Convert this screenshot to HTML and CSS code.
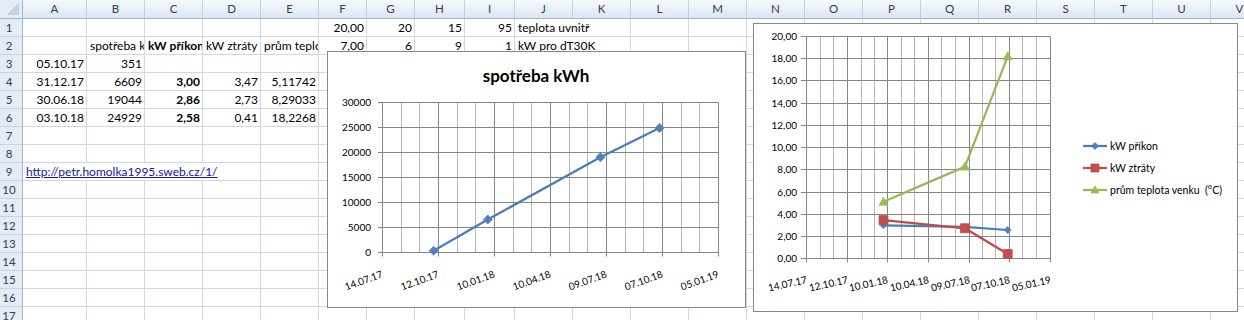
FILE: index.html
```html
<!DOCTYPE html>
<html lang="cs">

<head>
  <meta charset="UTF-8">
  <title>spotřeba kWh</title>
  <link rel="stylesheet" href="styles.css">
</head>

<body>
  <div class="sheet-wrap">
    <table class="sheet">
      <colgroup>
        <col class="c-rh">
        <col class="c-a">
        <col class="c-std" span="4">
        <col class="c-fg" span="2">
        <col class="c-hi" span="2">
        <col class="c-std" span="13">
      </colgroup>
      <tr class="head">
        <th class="corner"><span class="tri"></span></th>
        <th>A</th><th>B</th><th>C</th><th>D</th><th>E</th><th>F</th><th>G</th><th>H</th><th>I</th><th>J</th><th>K</th>
        <th>L</th><th>M</th><th>N</th><th>O</th><th>P</th><th>Q</th><th>R</th><th>S</th><th>T</th><th>U</th><th>V</th>
      </tr>
      <tr>
        <th class="rh">1</th>
        <td></td><td></td><td></td><td></td><td></td>
        <td class="num">20,00</td><td class="num">20</td><td class="num">15</td><td class="num">95</td>
        <td colspan="2" class="spill">teplota uvnitř</td>
        <td></td><td></td><td></td><td></td><td></td><td></td><td></td><td></td><td></td><td></td><td></td>
      </tr>
      <tr>
        <th class="rh">2</th>
        <td></td><td>spotřeba kWh</td><td class="bold">kW příkon</td><td>kW ztráty</td><td>prům teplota venku  (°C)</td>
        <td class="num">7,00</td><td class="num">6</td><td class="num">9</td><td class="num">1</td>
        <td colspan="2" class="spill">kW pro dT30K</td>
        <td></td><td></td><td></td><td></td><td></td><td></td><td></td><td></td><td></td><td></td><td></td>
      </tr>
      <tr>
        <th class="rh">3</th>
        <td class="num">05.10.17</td><td class="num">351</td>
        <td></td><td></td><td></td><td></td><td></td><td></td><td></td><td></td><td></td><td></td>
        <td></td><td></td><td></td><td></td><td></td><td></td><td></td><td></td><td></td><td></td>
      </tr>
      <tr>
        <th class="rh">4</th>
        <td class="num">31.12.17</td><td class="num">6609</td><td class="num bold">3,00</td><td class="num">3,47</td><td class="num">5,11742</td>
        <td></td><td></td><td></td><td></td><td></td><td></td><td></td><td></td><td></td>
        <td></td><td></td><td></td><td></td><td></td><td></td><td></td><td></td>
      </tr>
      <tr>
        <th class="rh">5</th>
        <td class="num">30.06.18</td><td class="num">19044</td><td class="num bold">2,86</td><td class="num">2,73</td><td class="num">8,29033</td>
        <td></td><td></td><td></td><td></td><td></td><td></td><td></td><td></td><td></td>
        <td></td><td></td><td></td><td></td><td></td><td></td><td></td><td></td>
      </tr>
      <tr>
        <th class="rh">6</th>
        <td class="num">03.10.18</td><td class="num">24929</td><td class="num bold">2,58</td><td class="num">0,41</td><td class="num">18,2268</td>
        <td></td><td></td><td></td><td></td><td></td><td></td><td></td><td></td><td></td>
        <td></td><td></td><td></td><td></td><td></td><td></td><td></td><td></td>
      </tr>
      <tr>
        <th class="rh">7</th>
        <td></td><td></td><td></td><td></td><td></td><td></td><td></td><td></td><td></td><td></td><td></td>
        <td></td><td></td><td></td><td></td><td></td><td></td><td></td><td></td><td></td><td></td><td></td>
      </tr>
      <tr>
        <th class="rh">8</th>
        <td></td><td></td><td></td><td></td><td></td><td></td><td></td><td></td><td></td><td></td><td></td>
        <td></td><td></td><td></td><td></td><td></td><td></td><td></td><td></td><td></td><td></td><td></td>
      </tr>
      <tr>
        <th class="rh">9</th>
        <td colspan="4" class="spill"><a href="http://petr.homolka1995.sweb.cz/1/">http://petr.homolka1995.sweb.cz/1/</a></td>
        <td></td><td></td><td></td><td></td><td></td><td></td><td></td><td></td><td></td>
        <td></td><td></td><td></td><td></td><td></td><td></td><td></td><td></td><td></td>
      </tr>
      <tr>
        <th class="rh">10</th>
        <td></td><td></td><td></td><td></td><td></td><td></td><td></td><td></td><td></td><td></td><td></td>
        <td></td><td></td><td></td><td></td><td></td><td></td><td></td><td></td><td></td><td></td><td></td>
      </tr>
      <tr>
        <th class="rh">11</th>
        <td></td><td></td><td></td><td></td><td></td><td></td><td></td><td></td><td></td><td></td><td></td>
        <td></td><td></td><td></td><td></td><td></td><td></td><td></td><td></td><td></td><td></td><td></td>
      </tr>
      <tr>
        <th class="rh">12</th>
        <td></td><td></td><td></td><td></td><td></td><td></td><td></td><td></td><td></td><td></td><td></td>
        <td></td><td></td><td></td><td></td><td></td><td></td><td></td><td></td><td></td><td></td><td></td>
      </tr>
      <tr>
        <th class="rh">13</th>
        <td></td><td></td><td></td><td></td><td></td><td></td><td></td><td></td><td></td><td></td><td></td>
        <td></td><td></td><td></td><td></td><td></td><td></td><td></td><td></td><td></td><td></td><td></td>
      </tr>
      <tr>
        <th class="rh">14</th>
        <td></td><td></td><td></td><td></td><td></td><td></td><td></td><td></td><td></td><td></td><td></td>
        <td></td><td></td><td></td><td></td><td></td><td></td><td></td><td></td><td></td><td></td><td></td>
      </tr>
      <tr>
        <th class="rh">15</th>
        <td></td><td></td><td></td><td></td><td></td><td></td><td></td><td></td><td></td><td></td><td></td>
        <td></td><td></td><td></td><td></td><td></td><td></td><td></td><td></td><td></td><td></td><td></td>
      </tr>
      <tr>
        <th class="rh">16</th>
        <td></td><td></td><td></td><td></td><td></td><td></td><td></td><td></td><td></td><td></td><td></td>
        <td></td><td></td><td></td><td></td><td></td><td></td><td></td><td></td><td></td><td></td><td></td>
      </tr>
      <tr>
        <th class="rh">17</th>
        <td></td><td></td><td></td><td></td><td></td><td></td><td></td><td></td><td></td><td></td><td></td>
        <td></td><td></td><td></td><td></td><td></td><td></td><td></td><td></td><td></td><td></td><td></td>
      </tr>
    </table>

    <!-- graf 1: spotřeba kWh -->
    <div class="chart chart-kwh">
      <svg width="417" height="255" viewBox="328 52 417 255">
        <text class="title" x="536" y="82" text-anchor="middle">spotřeba kWh</text>
        <path class="minor" d="M401.5 102.5V252.5M419.5 102.5V252.5M457.5 102.5V252.5M475.5 102.5V252.5M513.5 102.5V252.5M531.5 102.5V252.5M569.5 102.5V252.5M587.5 102.5V252.5M625.5 102.5V252.5M643.5 102.5V252.5M681.5 102.5V252.5M699.5 102.5V252.5"/>
        <path class="major" d="M382.5 102.5H718.5M382.5 127.5H718.5M382.5 152.5H718.5M382.5 177.5H718.5M382.5 202.5H718.5M382.5 227.5H718.5M378 252.5H718.5
          M382.5 102.5V256.5M438.5 102.5V256.5M494.5 102.5V256.5M550.5 102.5V256.5M606.5 102.5V256.5M662.5 102.5V256.5M718.5 102.5V256.5
          M378 102.5H382.5M378 127.5H382.5M378 152.5H382.5M378 177.5H382.5M378 202.5H382.5M378 227.5H382.5"/>
        <g class="ylab" text-anchor="end">
          <text x="371" y="106">30000</text>
          <text x="371" y="131">25000</text>
          <text x="371" y="156">20000</text>
          <text x="371" y="181">15000</text>
          <text x="371" y="206">10000</text>
          <text x="371" y="231">5000</text>
          <text x="371" y="256">0</text>
        </g>
        <g class="xlab" text-anchor="end">
          <text transform="translate(383.5 277) rotate(-20)">14.07.17</text>
          <text transform="translate(439.5 277) rotate(-20)">12.10.17</text>
          <text transform="translate(495.5 277) rotate(-20)">10.01.18</text>
          <text transform="translate(551.5 277) rotate(-20)">10.04.18</text>
          <text transform="translate(607.5 277) rotate(-20)">09.07.18</text>
          <text transform="translate(663.5 277) rotate(-20)">07.10.18</text>
          <text transform="translate(719.5 277) rotate(-20)">05.01.19</text>
        </g>
        <polyline class="s-blue" points="433.6,250.7 487.8,219.5 600.4,157.3 659.5,127.9"/>
        <path class="m-blue" d="M433.6 246.2l4.5 4.5-4.5 4.5-4.5-4.5zM487.8 215l4.5 4.5-4.5 4.5-4.5-4.5zM600.4 152.8l4.5 4.5-4.5 4.5-4.5-4.5zM659.5 123.4l4.5 4.5-4.5 4.5-4.5-4.5z"/>
      </svg>
    </div>

    <!-- graf 2: příkon, ztráty, teplota -->
    <div class="chart chart-temp">
      <svg width="483" height="287" viewBox="754 24 483 287">
        <path class="minor" d="M820.5 36.5V258.5M833.5 36.5V258.5M861.5 36.5V258.5M874.5 36.5V258.5M901.5 36.5V258.5M914.5 36.5V258.5M941.5 36.5V258.5M955.5 36.5V258.5M982.5 36.5V258.5M995.5 36.5V258.5M1022.5 36.5V258.5M1036.5 36.5V258.5"/>
        <path class="major" d="M801 36.5H1050.5M801 58.5H1050.5M801 80.5H1050.5M801 103.5H1050.5M801 125.5H1050.5M801 147.5H1050.5M801 169.5H1050.5M801 192.5H1050.5M801 214.5H1050.5M801 236.5H1050.5M801 258.5H1050.5
          M806.5 36.5V262.5M847.5 36.5V262.5M887.5 36.5V262.5M928.5 36.5V262.5M969.5 36.5V262.5M1009.5 36.5V262.5M1050.5 36.5V262.5"/>
        <g class="ylab" text-anchor="end">
          <text x="797" y="40">20,00</text>
          <text x="797" y="62">18,00</text>
          <text x="797" y="84">16,00</text>
          <text x="797" y="107">14,00</text>
          <text x="797" y="129">12,00</text>
          <text x="797" y="151">10,00</text>
          <text x="797" y="173">8,00</text>
          <text x="797" y="196">6,00</text>
          <text x="797" y="218">4,00</text>
          <text x="797" y="240">2,00</text>
          <text x="797" y="262">0,00</text>
        </g>
        <g class="xlab" text-anchor="end">
          <text transform="translate(807.5 283) rotate(-12.5)">14.07.17</text>
          <text transform="translate(848.5 283) rotate(-12.5)">12.10.17</text>
          <text transform="translate(888.5 283) rotate(-12.5)">10.01.18</text>
          <text transform="translate(929.5 283) rotate(-12.5)">10.04.18</text>
          <text transform="translate(970.5 283) rotate(-12.5)">09.07.18</text>
          <text transform="translate(1010.5 283) rotate(-12.5)">07.10.18</text>
          <text transform="translate(1051.5 283) rotate(-12.5)">05.01.19</text>
        </g>
        <polyline class="s-blue" points="883.5,225.3 965,226.9 1007.7,230"/>
        <path class="m-blue" d="M883.5 221.8l3.5 3.5-3.5 3.5-3.5-3.5zM965 223.4l3.5 3.5-3.5 3.5-3.5-3.5zM1007.7 226.5l3.5 3.5-3.5 3.5-3.5-3.5z"/>
        <polyline class="s-red" points="883.5,220.1 965,228.3 1007.7,254"/>
        <path class="m-red" d="M879 215.6h9v9h-9zM960.5 223.8h9v9h-9zM1003.2 249.5h9v9h-9z"/>
        <polyline class="s-green" points="883.5,201.8 965,166.6 1007.7,56.3"/>
        <path class="m-green" d="M883.5 197.3l4.5 8h-9zM965 162.1l4.5 8h-9zM1007.7 51.8l4.5 8h-9z"/>

        <g class="legend">
          <path class="s-blue" d="M1083 146H1107"/>
          <path class="m-blue" d="M1095 142.5l3.5 3.5-3.5 3.5-3.5-3.5z"/>
          <text x="1110" y="150">kW příkon</text>
          <path class="s-red" d="M1083 168H1107"/>
          <path class="m-red" d="M1091 164h8v8h-8z"/>
          <text x="1110" y="172">kW ztráty</text>
          <path class="s-green" d="M1083 190H1107"/>
          <path class="m-green" d="M1095 186l4 7h-8z"/>
          <text x="1110" y="194">prům teplota venku&#160; (°C)</text>
        </g>
      </svg>
    </div>
  </div>
</body>

</html>
```

FILE: styles.css
```css
body {
  margin: 0;
  background-color: #fff;
  font-family: Lato, "Liberation Sans", sans-serif;
  overflow: hidden;
}

.sheet-wrap {
  position: relative;
}

/* tabulka jako v Excelu */
.sheet {
  border-collapse: separate;
  border-spacing: 0;
  table-layout: fixed;
  width: 1269px;
  font-size: 12px;
  color: #000;
}

.c-rh {
  width: 23px;
}

.c-a {
  width: 64px;
}

.c-std {
  width: 58px;
}

.c-fg {
  width: 48px;
}

.c-hi {
  width: 50px;
}

.sheet tr {
  height: 18px;
}

.sheet tr.head {
  height: 19px;
}

.sheet td {
  padding: 0 2px 0 3px;
  line-height: 17px;
  vertical-align: top;
  white-space: nowrap;
  overflow: hidden;
  border-right: 1px solid #d0d7e5;
  border-bottom: 1px solid #d0d7e5;
}

.sheet td.num {
  text-align: right;
}

.sheet td.bold {
  font-weight: bold;
}

.sheet td.spill {
  overflow: visible;
}

.sheet a {
  color: #1414a8;
  text-decoration: underline;
}

/* hlavičky sloupců a řádků */
.sheet th {
  font-weight: normal;
  font-size: 11.5px;
  color: #333d4d;
  padding: 0;
}

.head th {
  line-height: 18px;
  background: linear-gradient(#f6f9fd, #dde6f2);
  border-right: 1px solid #c3d0e2;
  border-bottom: 1px solid #9eb6ce;
}

.head th.corner {
  position: relative;
  background: #e4ecf7;
  border-right: 1px solid #9eb6ce;
}

.corner .tri {
  position: absolute;
  right: 3px;
  bottom: 3px;
  width: 12px;
  height: 12px;
  background: linear-gradient(135deg, transparent 50%, #c4d3e6 50%);
}

.sheet th.rh {
  line-height: 17px;
  text-align: center;
  padding-right: 4px;
  background-color: #e4ecf7;
  border-right: 1px solid #9eb6ce;
  border-bottom: 1px solid #c5d3e4;
}

/* grafy */
.chart {
  position: absolute;
  box-sizing: border-box;
  background-color: #fff;
  border: 1px solid #868686;
}

.chart svg {
  display: block;
}

.chart-kwh {
  left: 327px;
  top: 51px;
  width: 419px;
  height: 257px;
}

.chart-temp {
  left: 753px;
  top: 23px;
  width: 485px;
  height: 289px;
}

.chart text {
  font-family: Lato, "Liberation Sans", sans-serif;
  font-size: 10px;
  fill: #000;
}

.chart text.title {
  font-size: 17px;
  font-weight: bold;
}

.chart .legend text {
  font-size: 10.5px;
}

.minor {
  stroke: #b5b5b5;
  stroke-width: 1;
  fill: none;
}

.major {
  stroke: #868686;
  stroke-width: 1;
  fill: none;
}

.s-blue,
.s-red,
.s-green {
  fill: none;
  stroke-width: 2.25;
  stroke-linejoin: round;
}

.s-blue {
  stroke: #4a7ebb;
}

.s-red {
  stroke: #be4b48;
}

.s-green {
  stroke: #98b954;
}

.m-blue {
  fill: #4f81bd;
  stroke: #4a7ebb;
  stroke-width: 0.75;
}

.m-red {
  fill: #c0504d;
  stroke: #be4b48;
  stroke-width: 0.75;
}

.m-green {
  fill: #9bbb59;
  stroke: #98b954;
  stroke-width: 0.75;
}
```
